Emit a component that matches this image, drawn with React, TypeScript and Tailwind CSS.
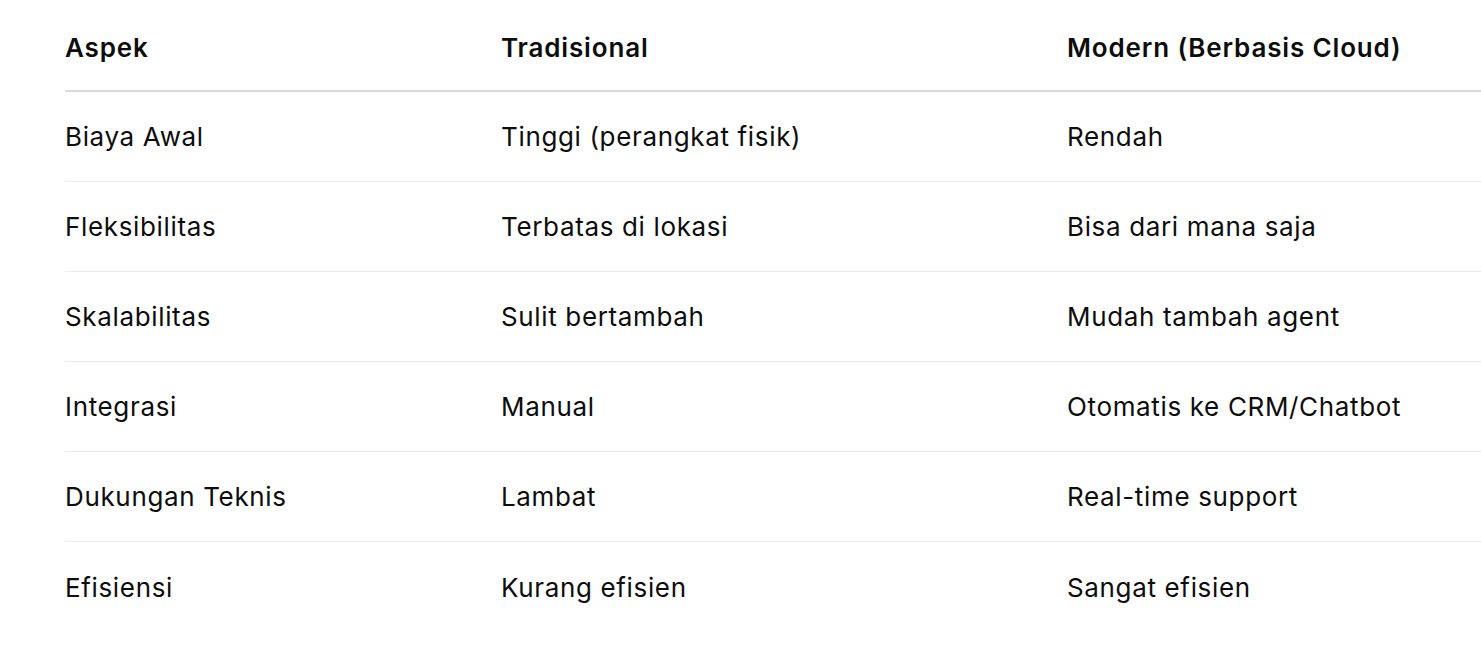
const rows = [
  ["Biaya Awal", "Tinggi (perangkat fisik)", "Rendah"],
  ["Fleksibilitas", "Terbatas di lokasi", "Bisa dari mana saja"],
  ["Skalabilitas", "Sulit bertambah", "Mudah tambah agent"],
  ["Integrasi", "Manual", "Otomatis ke CRM/Chatbot"],
  ["Dukungan Teknis", "Lambat", "Real-time support"],
  ["Efisiensi", "Kurang efisien", "Sangat efisien"],
];

const App = () => {
  return (
    <div className="min-h-screen bg-white pl-[65px] overflow-hidden font-['Inter',sans-serif] text-[#0d0d0d] text-[26px] tracking-[0.65px]">
      <div className="grid grid-cols-[436px_566px_1fr] h-[92px] pt-[4px] border-b-2 border-[#d9d9d9] items-center font-semibold tracking-[0.85px]">
        <div>Aspek</div>
        <div>Tradisional</div>
        <div>Modern (Berbasis Cloud)</div>
      </div>
      {rows.map((r, i) => (
        <div
          key={r[0]}
          className={
            i < rows.length - 1
              ? "grid grid-cols-[436px_566px_1fr] h-[90px] items-center border-b border-[#ececec]"
              : "grid grid-cols-[436px_566px_1fr] h-[90px] items-center"
          }
        >
          <div>{r[0]}</div>
          <div>{r[1]}</div>
          <div>{r[2]}</div>
        </div>
      ))}
    </div>
  );
};

export default App;
